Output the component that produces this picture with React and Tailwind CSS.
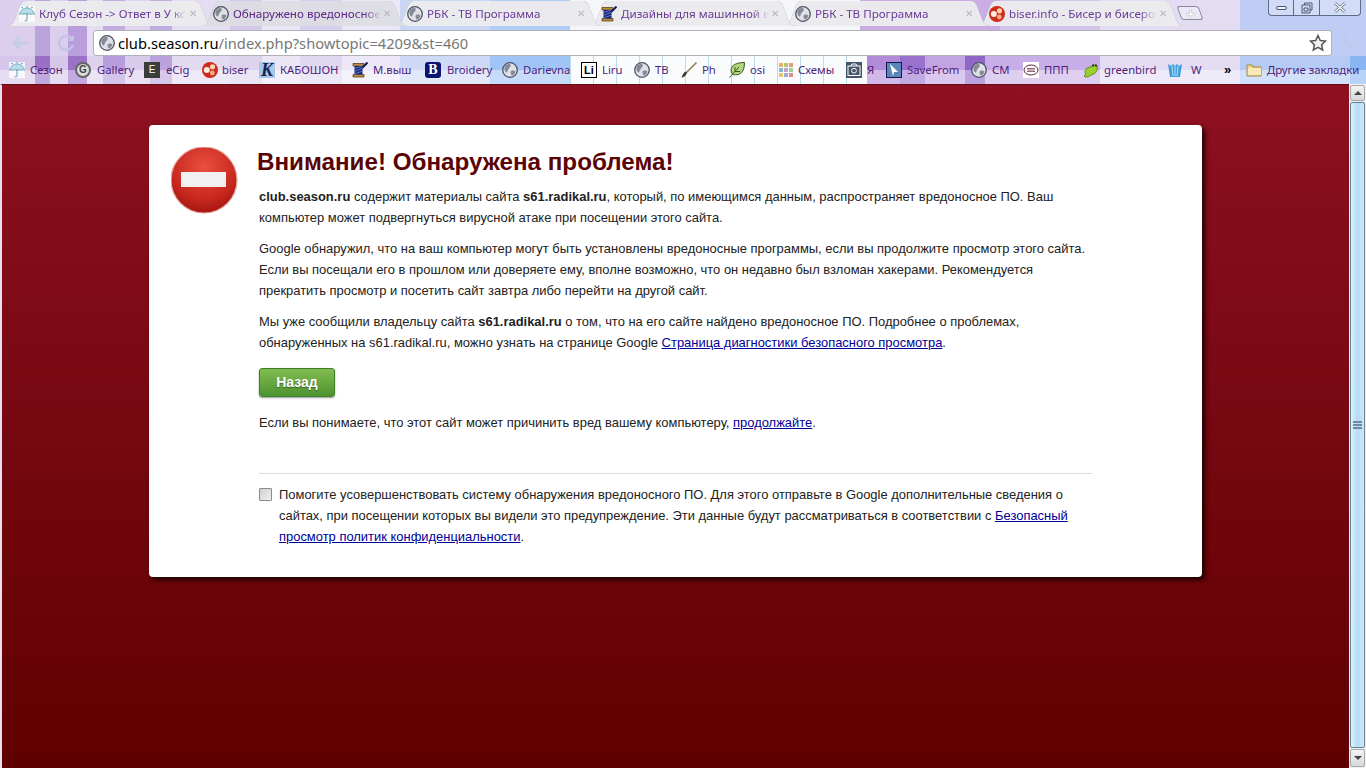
import React from "react";

const Globe = () => (
  <svg width="16" height="16" viewBox="0 0 16 16" className="shrink-0">
    <circle cx="8" cy="8" r="7.300" fill="#dfe1e6" stroke="#4c5066" strokeWidth="1.300" />
    <path d="M2.500 5c2-3 4-3.300 6-2.500 1 2-1 3-2 4.500s-1 3.500-2 3.500S2 8 2.500 5zM9 9c2-1 4.500 0 4.500 1-1 2-2.500 3.500-3.500 3.500S8 10 9 9z" fill="#858a96" />
  </svg>
);
const Umbrella = () => (
  <svg width="16" height="16" viewBox="0 0 16 16" className="shrink-0">
    <rect width="16" height="16" fill="#fff" fillOpacity=".75" />
    <path d="M.5 8.500C1.500 4 4.500 2 8 2s6.500 2 7.500 6.500c-1.200-1-2.500-1-3.500 0-1-1-3-1-4 0-1-1-3-1-4 0-1-1-2.300-1-3.500 0z" fill="#b8dde6" stroke="#5a9fb5" strokeWidth=".8" />
    <path d="M8 7v7c0 1.300-2.200 1.300-2.200 0" fill="none" stroke="#5a9fb5" />
    <circle cx="3" cy="1.500" r=".8" fill="#5a9fb5" /><circle cx="13" cy="1.500" r=".8" fill="#5a9fb5" /><circle cx="8" cy=".8" r=".7" fill="#5a9fb5" />
  </svg>
);
const Biser = () => (
  <svg width="16" height="16" viewBox="0 0 16 16" className="shrink-0">
    <circle cx="8" cy="8" r="8" fill="#cf2a1c" />
    <circle cx="10.500" cy="4.800" r="2.600" fill="#f8d4b0" />
    <circle cx="4.800" cy="8" r="3" fill="#fbeedf" />
    <circle cx="10.300" cy="11" r="2.400" fill="#f2b080" />
  </svg>
);
const Spool = () => (
  <svg width="16" height="16" viewBox="0 0 16 16" className="shrink-0">
    <path d="M1 1.500h11v2.500H1zM1 12.500h11V15H1z" fill="#c08e42" stroke="#4b300c" strokeWidth=".7" />
    <path d="M2.500 4h8v8.500h-8z" fill="#18297c" />
    <path d="M2.500 6.500l8-2.500M2.500 9.500l8-3.500M2.500 12l8-3" stroke="#7f95e0" strokeWidth=".7" />
    <path d="M10 6l5.500-5.500" stroke="#121c55" strokeWidth="2" />
  </svg>
);
const GalleryIcon = () => (
  <span className="flex h-4 w-4 shrink-0 items-center justify-center rounded-full border-2 border-[#666] bg-[#ddd] text-[10px] font-bold leading-none text-[#444] [font-family:'Liberation_Sans',sans-serif]">G</span>
);
const EIcon = () => (
  <span className="flex h-4 w-4 shrink-0 items-center justify-center bg-[#3a3d3a] text-[10px] leading-none text-white [font-family:'Liberation_Sans',sans-serif]">E</span>
);
const KIcon = () => (
  <span className="flex h-4 w-4 shrink-0 items-center justify-center bg-[#a9c7ea] text-[18px] font-bold italic leading-none text-[#14224f] [font-family:'Liberation_Serif',serif]">K</span>
);
const BIcon = () => (
  <span className="flex h-4 w-4 shrink-0 items-center justify-center rounded-[3px] bg-[#0b1370] text-[14px] font-bold leading-none text-white [font-family:'Liberation_Serif',serif]">B</span>
);
const LiIcon = () => (
  <span className="flex h-4 w-4 shrink-0 items-center justify-center border border-black bg-white text-[11px] font-bold leading-none text-black [font-family:'Liberation_Sans',sans-serif]">Li</span>
);
const Brush = () => (
  <svg width="16" height="16" viewBox="0 0 16 16" className="shrink-0">
    <path d="M15.500 .5L5 11" stroke="#8d7b48" strokeWidth="1.500" />
    <path d="M4.500 9.500l1.500 1.500c-1 2.500-3 4.500-5.500 4.500 1-2.500 2-5 4-6z" fill="#3d3d35" />
  </svg>
);
const Leaf = () => (
  <svg width="16" height="16" viewBox="0 0 16 16" className="shrink-0">
    <path d="M2.500 11C.5 5 5 .5 15.500 .5c0 10-5 13.500-11 12z" fill="#b4d681" stroke="#3d5a1e" />
    <path d="M.5 15.500L10 5M6 9.500V5M6 9.500h5" stroke="#3d5a1e" fill="none" />
  </svg>
);
const GridIcon = () => (
  <svg width="16" height="16" viewBox="0 0 16 16" className="shrink-0">
    {[["#e3b46a", 1, 1], ["#b5c56a", 6, 1], ["#e19a7a", 11, 1], ["#88b8d8", 1, 6], ["#c8a0d0", 6, 6], ["#9ccf9c", 11, 6], ["#e0c870", 1, 11], ["#a0a8d8", 6, 11], ["#d89090", 11, 11]].map(([c, x, y]) => (
      <rect key={c} x={x} y={y} width="4" height="4" fill={c} />
    ))}
  </svg>
);
const Camera = () => (
  <svg width="16" height="16" viewBox="0 0 16 16" className="shrink-0">
    <rect width="16" height="16" fill="#44566b" />
    <rect x="2" y="4" width="12" height="9.500" fill="none" stroke="#fff" />
    <path d="M5 4l1-2h4l1 2" fill="none" stroke="#fff" />
    <circle cx="8" cy="8.700" r="2.400" fill="none" stroke="#fff" />
  </svg>
);
const CursorIcon = () => (
  <svg width="16" height="16" viewBox="0 0 16 16" className="shrink-0">
    <rect x=".5" y=".5" width="15" height="15" fill="#5a86b8" stroke="#101a50" />
    <path d="M4 2l8 8H8l-1 4z" fill="#fff" />
  </svg>
);
const MailIcon = () => (
  <svg width="16" height="16" viewBox="0 0 16 16" className="shrink-0">
    <rect width="16" height="16" fill="#fff" />
    <ellipse cx="8" cy="8" rx="7" ry="5" fill="none" stroke="#5a2a3a" />
    <path d="M4 6.500h8M4 8h8M4 9.500h8" stroke="#5a2a3a" strokeWidth=".7" />
  </svg>
);
const Frog = () => (
  <svg width="16" height="16" viewBox="0 0 16 16" className="shrink-0">
    <path d="M3 12c-3-3 1-7 5-7 2-3 6-3 6 0 1 3-1 7-6 8-2 2-5 3-7 1z" fill="#9ad02c" stroke="#4c7a10" strokeWidth=".8" />
    <circle cx="10" cy="3.500" r="1" fill="#111" /><circle cx="13" cy="3.500" r="1" fill="#111" />
  </svg>
);
const Basket = () => (
  <svg width="16" height="16" viewBox="0 0 16 16" className="shrink-0">
    <path d="M1 2l3 2 2-2 2 2 2-2 2 2 3-2-2 13H3z" fill="#3f9fe0" />
    <path d="M5 4l1 10M8 4v10M11 4l-1 10" stroke="#dff" strokeWidth=".7" />
  </svg>
);
const Folder = () => (
  <svg width="16" height="16" viewBox="0 0 16 16" className="shrink-0">
    <path d="M1 3h5l1 2h8v9H1z" fill="#f2d88e" stroke="#a88a3e" />
    <path d="M2 6h13v7H2z" fill="#f9e9b8" />
  </svg>
);

const tabs = [
  { t: "Клуб Сезон -> Ответ в У кс", i: <Umbrella />, z: "z-[5]", c: "text-[#6a3a99]", bg: "bg-white/85" },
  { t: "Обнаружено вредоносное ПО", i: <Globe />, z: "z-[6]", c: "text-[#5d2a88]", bg: "bg-white/70" },
  { t: "РБК - ТВ Программа", i: <Globe />, z: "z-[4]", c: "text-[#6a3a99]", bg: "bg-white/85" },
  { t: "Дизайны для машинной вышивки", i: <Spool />, z: "z-[3]", c: "text-[#6a3a99]", bg: "bg-white/85" },
  { t: "РБК - ТВ Программа", i: <Globe />, z: "z-[2]", c: "text-[#6a3a99]", bg: "bg-white/85" },
  { t: "biser.info - Бисер и бисероплетение", i: <Biser />, z: "z-[1]", c: "text-[#6a3a99]", bg: "bg-white/85" },
];

const marks = [
  { l: "Сезон", i: <Umbrella />, w: "w-[66px]", g: "gap-[5px]" },
  { l: "Gallery", i: <GalleryIcon />, w: "w-[69px]", g: "gap-[6px]" },
  { l: "eCig", i: <EIcon />, w: "w-[58px]", g: "gap-[6px]" },
  { l: "biser", i: <Biser />, w: "w-[57px]", g: "gap-[4px]" },
  { l: "КАБОШОН", i: <KIcon />, w: "w-[93px]", g: "gap-[5px]" },
  { l: "М.выш", i: <Spool />, w: "w-[73px]", g: "gap-[5px]" },
  { l: "Broidery", i: <BIcon />, w: "w-[77px]", g: "gap-[6px]" },
  { l: "Darievna", i: <Globe />, w: "w-[79px]", g: "gap-[5px]" },
  { l: "Liru", i: <LiIcon />, w: "w-[53px]", g: "gap-[5px]" },
  { l: "ТВ", i: <Globe />, w: "w-[47px]", g: "gap-[5px]" },
  { l: "Ph", i: <Brush />, w: "w-[48px]", g: "gap-[5px]" },
  { l: "osi", i: <Leaf />, w: "w-[49px]", g: "gap-[5px]" },
  { l: "Схемы", i: <GridIcon />, w: "w-[68px]", g: "gap-[4px]" },
  { l: "Я", i: <Camera />, w: "w-[40px]", g: "gap-[5px]" },
  { l: "SaveFrom", i: <CursorIcon />, w: "w-[85px]", g: "gap-[5px]" },
  { l: "СМ", i: <Globe />, w: "w-[52px]", g: "gap-[5px]" },
  { l: "ППП", i: <MailIcon />, w: "w-[60px]", g: "gap-[5px]" },
  { l: "greenbird", i: <Frog />, w: "w-[84px]", g: "gap-[5px]" },
  { l: "W", i: <Basket />, w: "w-[57px]", g: "gap-[8px]" },
];

const Tab = ({ t, i, z, c, bg, first }) => (
  <div className={`relative h-[25px] w-[207px] shrink-0 drop-shadow-[0_0_0.6px_#6b6b80] ${z} ${first ? "" : "-ml-[13px]"}`}>
    <div className={`flex h-full items-center pl-[12px] ${bg} [clip-path:path('M0_25C5_25_6_22_8_18L13_5C14_2_16_0_19_0L188_0C191_0_193_2_194_5L199_18C201_22_202_25_207_25Z')]`}>
      {i}
      <span className={`ml-[4px] w-[148px] overflow-hidden whitespace-nowrap text-[11.600px] leading-[16px] [font-family:'Noto_Sans',sans-serif] [mask-image:linear-gradient(90deg,#000_88%,transparent)] ${c}`}>{t}</span>
      <span className="ml-[2px] text-[10px] leading-none text-[#b4b4be] [font-family:'Liberation_Sans',sans-serif]">✕</span>
    </div>
  </div>
);

const P = ({ children, className = "" }) => <p className={className}>{children}</p>;
const A = ({ children }) => <a className="text-[#000099] underline">{children}</a>;

export default function App() {
  return (
    <div className="flex h-[768px] w-[1366px] flex-col overflow-hidden bg-[#600000]">
      <header className="flex h-[56px] shrink-0 flex-col bg-[linear-gradient(90deg,#dccfee_35px,#bba3dc_35px,#bba3dc_50px,#dccfee_50px,#dccfee_68px,#b89fdb_68px,#b89fdb_87px,#e5ddf2_87px,#e5ddf2_103px,#c3acdf_103px,#c3acdf_125px,#e0d5ef_125px,#e0d5ef_150px,#c3acdf_150px,#c3acdf_172px,#e5ddf2_172px,#e5ddf2_230px,#d5c9ea_230px,#d5c9ea_262px,#ebe6f6_262px,#ebe6f6_300px,#d8cfee_300px,#d8cfee_342px,#eae7f6_342px,#eae7f6_400px,#c9d6f4_400px,#c9d6f4_490px,#afcdf6_490px,#afcdf6_570px,#f5f6fa_570px,#f5f6fa_860px,#caaee3_860px,#caaee3_1000px,#d4c4ea_1000px,#d4c4ea_1100px,#e4dcf2_1100px,#e4dcf2_1240px,#bfcdf4_1240px)]">
        <div className="flex h-[26px] shrink-0 items-start pl-[7px] pt-[1px]">
          {tabs.map((tab, n) => <Tab key={n} {...tab} first={n === 0} />)}
          <div className="ml-[-5px] mt-[5px] flex h-[14px] w-[22px] skew-x-[20deg] items-center justify-center rounded-[3px] border border-[#8a8a9e] bg-white/35">
            <span className="-skew-x-[20deg] text-[15px] font-bold leading-none text-white [text-shadow:0_0_1px_#555] [font-family:'Liberation_Sans',sans-serif]">+</span>
          </div>
          <div className="ml-auto mr-[5px] mt-[-1px] flex h-[16px] w-[93px] overflow-hidden rounded-b-[4px] border border-t-0 border-[#5d6d88] bg-white/30">
            <div className="flex w-[25px] items-center justify-center border-r border-[#5d6d88]">
              <span className="h-[4px] w-[11px] rounded-[2px] border border-[#4d5668] bg-white/70" />
            </div>
            <div className="flex w-[26px] items-center justify-center border-r border-[#5d6d88]">
              <svg width="12" height="12" viewBox="0 0 12 12"><path d="M3.500 3V1h7.500v7H9M1 3h8v8H1zM3 6h4v3H3z" fill="none" stroke="#4d5668" /></svg>
            </div>
            <div className="flex flex-1 items-center justify-center">
              <svg width="14" height="11" viewBox="0 0 14 11"><path d="M2 1l10 9M12 1L2 10" stroke="#5d6678" strokeWidth="2.600" /><path d="M2 1l10 9M12 1L2 10" stroke="#fff" strokeWidth="1.200" /></svg>
            </div>
          </div>
        </div>
        <div className="flex h-[30px] shrink-0 items-end">
          <div className="flex w-[93px] items-center self-center pl-[10px] pt-[4px]">
            <svg width="20" height="16" viewBox="0 0 20 16"><path d="M18 8H5M10 2L4 8l6 6" fill="none" stroke="#c6cde6" strokeWidth="3" /></svg>
            <svg width="20" height="18" viewBox="0 0 20 18" className="ml-[27px]"><path d="M15 5a7 7 0 1 0 1 6" fill="none" stroke="#c5c3e6" strokeWidth="2.500" /><path d="M17 1v6h-6z" fill="#c5c3e6" /></svg>
          </div>
          <div className="flex h-[26px] w-[1239px] items-center rounded-[3px] border border-[#b0b0b8] bg-white pl-[5px] pr-[4px] [font-family:'Noto_Sans',sans-serif]">
            <Globe />
            <span className="ml-[3px] text-[14.700px] leading-none text-[#777]"><span className="text-black">club.season.ru</span>/index.php?showtopic=4209&amp;st=460</span>
            <svg width="18" height="18" viewBox="0 0 18 18" className="ml-auto"><path d="M9 1.500l2.300 5 5.200.6-3.900 3.600 1.100 5.300L9 13.300 4.300 16l1.100-5.300L1.500 7.100l5.200-.6z" fill="#f4f4f4" stroke="#555" strokeWidth="1.500" /></svg>
          </div>
          <div className="flex flex-1 justify-center self-center pt-[3px]">
            <svg width="18" height="18" viewBox="0 0 18 18"><path d="M2 4l3-3 2 3-1 2 8 8-2 2-8-8-2 1z" fill="#bccbea" /></svg>
          </div>
        </div>
      </header>

      <nav className="flex h-[28px] shrink-0 items-center bg-[repeating-linear-gradient(90deg,#bcdcea_0,#bcdcea_1px,#f9fbfc_1px,#f9fbfc_23px),linear-gradient(180deg,rgba(255,255,255,0.4),rgba(255,255,255,0.4)),linear-gradient(90deg,#d6c6ea_35px,#9a70c6_35px,#9a70c6_50px,#d6c6ea_50px,#d6c6ea_68px,#9c72c8_68px,#9c72c8_87px,#dcd2ee_87px,#dcd2ee_103px,#b89cdc_103px,#b89cdc_125px,#d8ccec_125px,#d8ccec_150px,#bba2dd_150px,#bba2dd_172px,#e2daf0_172px,#e2daf0_230px,#dcd4ee_230px,#dcd4ee_262px,#ebe6f6_262px,#ebe6f6_300px,#e0d8f0_300px,#e0d8f0_342px,#ece8f7_342px,#ece8f7_400px,#ced9f5_400px,#ced9f5_490px,#9fc4f5_490px,#9fc4f5_570px,#f9fbfc_570px,#f9fbfc_867px,#b18ad8_867px,#b18ad8_900px,#9a72ce_900px,#9a72ce_925px,#c2a4e3_925px,#c2a4e3_965px,#8f65c6_965px,#8f65c6_985px,#c8aee6_985px,#c8aee6_1100px,#e4dcf2_1100px,#e4dcf2_1240px,#b5cbf5_1240px,#b5cbf5_1350px,#8ab6f2_1350px)] bg-no-repeat bg-size-[297px_100%,100%_14px,100%_100%] bg-position-[570px_0,0_14px,0_0] pl-[9px] text-[11.300px] leading-[16px] text-[#4f1f7c] [font-family:'Noto_Sans',sans-serif]">
        {marks.map((m) => (
          <div key={m.l} className={`flex shrink-0 items-center ${m.w} ${m.g}`}>
            {m.i}
            <span className="whitespace-nowrap">{m.l}</span>
          </div>
        ))}
        <span className="w-[22px] shrink-0 text-[13px] font-bold text-black [font-family:'Liberation_Sans',sans-serif]">»</span>
        <div className="flex shrink-0 items-center gap-[5px]">
          <Folder />
          <span className="whitespace-nowrap">Другие закладки</span>
        </div>
      </nav>

      <main className="flex min-h-0 flex-1">
        <div className="min-w-0 flex-1 border-t border-[#5f0a14] border-l-2 border-l-[#e8dff0] bg-[linear-gradient(180deg,#8e1021_0%,#5f0000_100%)] pl-[147px] pr-[147px] pt-[40px]">
          <section className="flex h-[452px] w-[1053px] rounded-[4px] bg-white pl-[22px] shadow-[3px_3px_5px_rgba(0,0,0,0.75)] [font-family:'Liberation_Sans',sans-serif]">
            <svg width="68" height="68" viewBox="0 0 68 68" className="mt-[22px] shrink-0">
              <defs>
                <radialGradient id="r" cx="50%" cy="30%" r="70%">
                  <stop offset="0%" stopColor="#e8503f" />
                  <stop offset="70%" stopColor="#c8281f" />
                  <stop offset="100%" stopColor="#a51610" />
                </radialGradient>
              </defs>
              <circle cx="33" cy="33" r="33" fill="url(#r)" stroke="#e4a79f" strokeWidth="1.200" />
              <rect x="10" y="25" width="45" height="15" fill="#f1f1f1" />
            </svg>
            <div className="ml-[18px] flex w-[835px] flex-col pt-[23px]">
              <h1 className="h-[38px] text-[24.200px] font-bold leading-[28px] text-[#5a0505]">Внимание! Обнаружена проблема!</h1>
              <div className="ml-[2px] w-[833px] text-[12.950px] leading-[21px] text-[#222]">
                <P className="mb-[10px]"><b>club.season.ru</b> содержит материалы сайта <b>s61.radikal.ru</b>, который, по имеющимся данным, распространяет вредоносное ПО. Ваш компьютер может подвергнуться вирусной атаке при посещении этого сайта.</P>
                <P className="mb-[10px]">Google обнаружил, что на ваш компьютер могут быть установлены вредоносные программы, если вы продолжите просмотр этого сайта. Если вы посещали его в прошлом или доверяете ему, вполне возможно, что он недавно был взломан хакерами. Рекомендуется прекратить просмотр и посетить сайт завтра либо перейти на другой сайт.</P>
                <P className="mb-[15px]">Мы уже сообщили владельцу сайта <b>s61.radikal.ru</b> о том, что на его сайте найдено вредоносное ПО. Подробнее о проблемах, обнаруженных на s61.radikal.ru, можно узнать на странице Google <A>Страница диагностики безопасного просмотра</A>.</P>
                <button className="mb-[15px] flex h-[29px] w-[76px] items-center justify-center rounded-[3px] border border-[#3f7f28] bg-[linear-gradient(180deg,#82bd50,#4c9331)] text-[14px] font-bold text-white shadow-[0_1px_2px_rgba(0,0,0,0.4)] [text-shadow:0_1px_1px_rgba(0,0,0,0.4)]">Назад</button>
                <P>Если вы понимаете, что этот сайт может причинить вред вашему компьютеру, <A>продолжайте</A>.</P>
                <div className="mb-[10px] mt-[40px] h-px bg-[#dddddd]" />
                <div className="flex gap-[7px]">
                  <span className="mt-[4px] h-[13px] w-[13px] shrink-0 rounded-[1px] border border-[#8a8a8a] bg-[linear-gradient(135deg,#cfcfcf,#f0f0f0)]" />
                  <P>Помогите усовершенствовать систему обнаружения вредоносного ПО. Для этого отправьте в Google дополнительные сведения о сайтах, при посещении которых вы видели это предупреждение. Эти данные будут рассматриваться в соответствии с <A>Безопасный просмотр политик конфиденциальности</A>.</P>
                </div>
              </div>
            </div>
          </section>
        </div>
        <aside className="flex w-[17px] shrink-0 flex-col gap-px bg-[#f0f0f0] p-px">
          <div className="flex h-[16px] items-center justify-center rounded-[2px] border border-[#a8a8a8] bg-[linear-gradient(180deg,#f4f4f4,#d8d8d8)]">
            <span className="h-0 w-0 border-x-[4px] border-b-[4px] border-x-transparent border-b-[#444]" />
          </div>
          <div className="flex flex-1 flex-col items-center justify-center rounded-[2px] border border-[#6a8296] bg-[linear-gradient(90deg,#dff0fb,#b3dcf5_50%,#cfe8f8)]">
            <span className="h-[2px] w-[9px] border-y border-[#6f8ba0]" />
            <span className="mt-px h-[2px] w-[9px] border-y border-[#6f8ba0]" />
            <span className="mt-px h-[2px] w-[9px] border-y border-[#6f8ba0]" />
          </div>
          <div className="flex h-[18px] items-center justify-center rounded-[2px] border border-[#a8a8a8] bg-[linear-gradient(180deg,#f4f4f4,#d8d8d8)]">
            <span className="h-0 w-0 border-x-[4px] border-t-[4px] border-x-transparent border-t-[#444]" />
          </div>
        </aside>
      </main>
    </div>
  );
}
